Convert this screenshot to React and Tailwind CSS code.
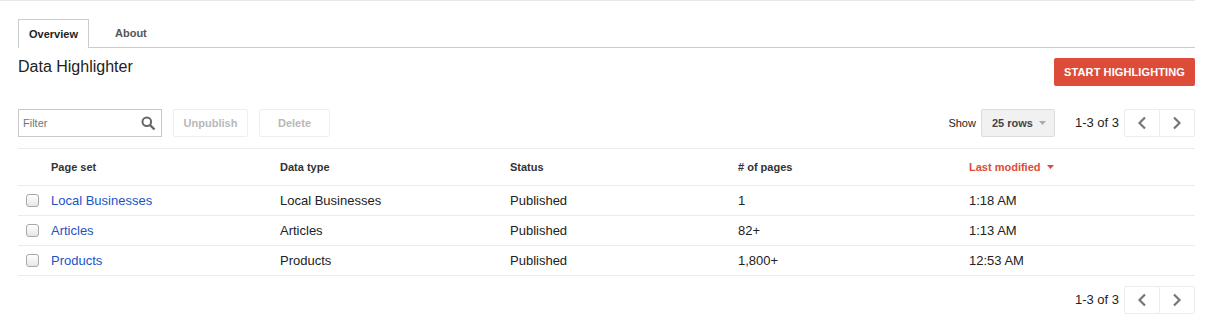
import React from "react";

const font = { fontFamily: '"Liberation Sans", Arial, sans-serif' };

function Chevron({ dir }) {
  return (
    <svg width="10" height="14" viewBox="0 0 10 14">
      {dir === "left" ? (
        <polyline points="8,1.5 2.5,7 8,12.5" fill="none" stroke="#777" strokeWidth="2.2" />
      ) : (
        <polyline points="2,1.5 7.5,7 2,12.5" fill="none" stroke="#777" strokeWidth="2.2" />
      )}
    </svg>
  );
}

function Pager() {
  return (
    <div className="flex items-center">
      <span className="text-[13px] text-[#222] mr-[5px]">1-3 of 3</span>
      <div className="flex">
        <button className="w-[36px] h-[28px] flex items-center justify-center border border-[#ececec] rounded-l-[2px] bg-white">
          <Chevron dir="left" />
        </button>
        <button className="w-[35px] h-[28px] flex items-center justify-center border border-l-0 border-[#ececec] rounded-r-[2px] bg-white">
          <Chevron dir="right" />
        </button>
      </div>
    </div>
  );
}

const rows = [
  ["Local Businesses", "Local Businesses", "Published", "1", "1:18 AM"],
  ["Articles", "Articles", "Published", "82+", "1:13 AM"],
  ["Products", "Products", "Published", "1,800+", "12:53 AM"],
];

export default function App() {
  return (
    <div className="w-[1209px] h-[328px] bg-white" style={font}>
      <div className="w-[1195px] h-px bg-[#e8e8e8]" />
      <div className="pl-[18px] w-[1195px]">
        {/* Tabs */}
        <div className="mt-[18px] flex border-b border-[#cccccc] h-[29px]">
          <div className="h-[29px] w-[71px] border border-b-0 border-[#cccccc] bg-white -mb-px flex items-center justify-center text-[11px] font-bold text-[#222]">
            Overview
          </div>
          <div className="h-[28px] ml-[26px] flex items-center text-[11px] font-bold text-[#555]">
            About
          </div>
        </div>

        {/* Title row */}
        <div className="flex justify-between items-start mt-[10px]">
          <div className="text-[16px] leading-[18px] text-[#222] pt-0">Data Highlighter</div>
          <button className="h-[28px] w-[141px] bg-[#dd4b39] rounded-[2px] text-white text-[11px] font-bold tracking-[0.1px]">
            START HIGHLIGHTING
          </button>
        </div>

        {/* Toolbar */}
        <div className="flex justify-between items-center mt-[23px]">
          <div className="flex items-center gap-[11px]">
            <div className="w-[144px] h-[28px] border border-[#c9c9c9] flex items-center justify-between pl-[4px] pr-[5px]">
              <span className="text-[11px] text-[#757575]">Filter</span>
              <svg width="15" height="15" viewBox="0 0 15 15">
                <circle cx="5.8" cy="5.8" r="4.3" fill="none" stroke="#666" strokeWidth="2" />
                <line x1="9" y1="9" x2="13.5" y2="13.5" stroke="#666" strokeWidth="2.4" />
              </svg>
            </div>
            <button className="w-[75px] h-[28px] border border-[#efefef] rounded-[2px] text-[11px] font-bold text-[#b8b8b8]">
              Unpublish
            </button>
            <button className="w-[71px] h-[28px] border border-[#efefef] rounded-[2px] text-[11px] font-bold text-[#b8b8b8]">
              Delete
            </button>
          </div>
          <div className="flex items-center">
            <span className="text-[11px] text-[#222] mr-[5px]">Show</span>
            <div className="w-[74px] h-[28px] bg-[#f1f1f1] border border-[#dcdcdc] rounded-[2px] flex items-center pl-[10px] pr-[8px] justify-between">
              <span className="text-[11px] font-bold text-[#444]">25 rows</span>
              <svg width="7" height="4" viewBox="0 0 7 4">
                <polygon points="0,0 7,0 3.5,4" fill="#aaa" />
              </svg>
            </div>
            <div className="ml-[20px]">
              <Pager />
            </div>
          </div>
        </div>

        {/* Table */}
        <div className="mt-[11px] border-t border-[#ebebeb]">
          <div className="flex h-[37px] items-center border-b border-[#ebebeb] text-[11px] font-bold text-[#333]">
            <div className="w-[33px]" />
            <div className="w-[229px]">Page set</div>
            <div className="w-[230px]">Data type</div>
            <div className="w-[228px]">Status</div>
            <div className="w-[231px]"># of pages</div>
            <div className="flex items-center text-[#dd4b39]">
              Last modified
              <svg className="ml-[6px]" width="7" height="4" viewBox="0 0 7 4">
                <polygon points="0,0 7,0 3.5,4" fill="#dd4b39" />
              </svg>
            </div>
          </div>
          {rows.map((r) => (
            <div key={r[0]} className="flex h-[30px] items-center border-b border-[#ebebeb] text-[13px] text-[#222]">
              <div className="w-[33px] pl-[8px] flex items-center">
                <div className="w-[13px] h-[13px] rounded-[3px] border border-[#a9a9a9] bg-gradient-to-b from-white to-[#e6e6e6]" />
              </div>
              <div className="w-[229px] text-[#1a53c7]">{r[0]}</div>
              <div className="w-[230px]">{r[1]}</div>
              <div className="w-[228px]">{r[2]}</div>
              <div className="w-[231px]">{r[3]}</div>
              <div>{r[4]}</div>
            </div>
          ))}
        </div>

        <div className="flex justify-end mt-[10px]">
          <Pager />
        </div>
      </div>
    </div>
  );
}
